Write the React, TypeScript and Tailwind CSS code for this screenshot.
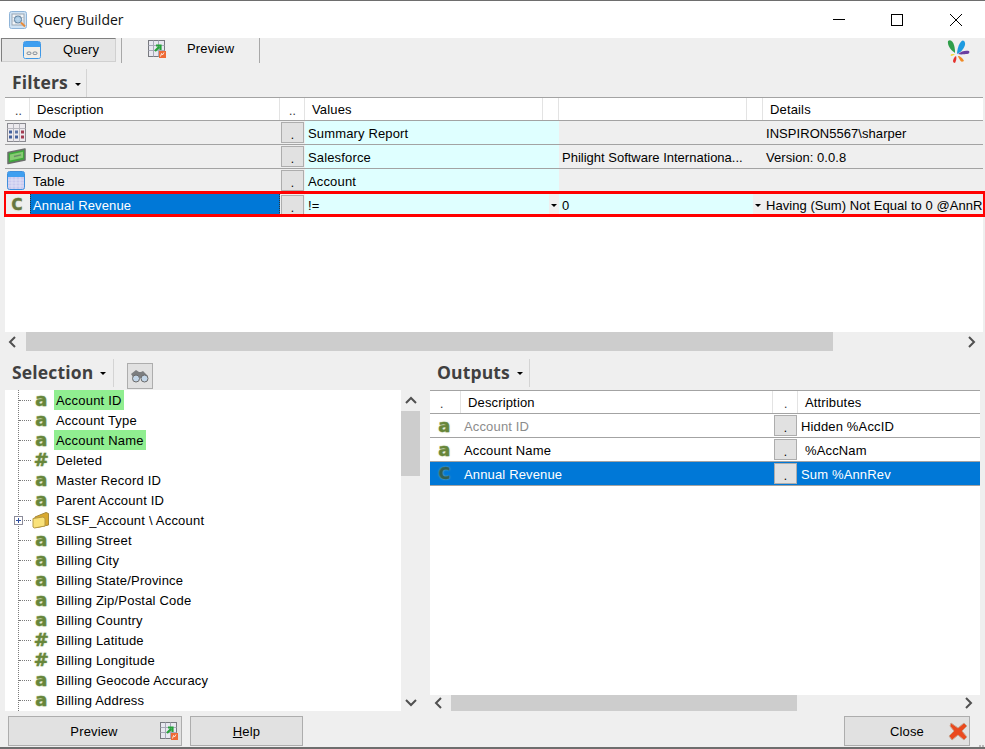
import type { ReactNode } from "react";

const treeItems = [
  { icon: "a", label: "Account ID", hit: true },
  { icon: "a", label: "Account Type" },
  { icon: "a", label: "Account Name", hit: true },
  { icon: "#", label: "Deleted" },
  { icon: "a", label: "Master Record ID" },
  { icon: "a", label: "Parent Account ID" },
  { icon: "folder", label: "SLSF_Account \\ Account" },
  { icon: "a", label: "Billing Street" },
  { icon: "a", label: "Billing City" },
  { icon: "a", label: "Billing State/Province" },
  { icon: "a", label: "Billing Zip/Postal Code" },
  { icon: "a", label: "Billing Country" },
  { icon: "#", label: "Billing Latitude" },
  { icon: "#", label: "Billing Longitude" },
  { icon: "a", label: "Billing Geocode Accuracy" },
  { icon: "a", label: "Billing Address" },
];

const Chevron = ({ dir }: { dir: "left" | "right" | "up" | "down" }) => {
  const points = {
    left: "7,1 2,6 7,11",
    right: "3,1 8,6 3,11",
    up: "1,8 6,3 11,8",
    down: "1,3 6,8 11,3",
  }[dir];
  return (
    <svg width="12" height="12" viewBox="0 0 12 12" fill="none">
      <polyline points={points} stroke="#505050" strokeWidth="2" />
    </svg>
  );
};

const Caret = () => (
  <span className="inline-block w-0 h-0 border-x-[3px] border-x-transparent border-t-[3px] border-t-black" />
);

const Letter = ({ char, color = "#67863a", size = "text-[18px]" }: { char: string; color?: string; size?: string }) => (
  <span
    className={`[font-family:'DejaVu_Sans',sans-serif] font-bold leading-none ${size} [text-shadow:0_0_2px_#b7c99a] [-webkit-text-stroke:0.4px_currentColor]`}
    style={{ color }}
  >
    {char}
  </span>
);

const AppIcon = () => (
  <svg width="18" height="18" viewBox="0 0 18 18">
    <rect x="0.5" y="0.5" width="17" height="17" rx="2" fill="#cfe3f5" stroke="#8fb4d8" />
    <rect x="3" y="3" width="12" height="11" fill="#f2f5f8" stroke="#9aa7b5" />
    <path d="M3 6.5h12M3 10h12M7 3v11M11 3v11" stroke="#b5bfca" strokeWidth="0.7" />
    <circle cx="9" cy="8.5" r="3.6" fill="#9ec7e8" fillOpacity="0.7" stroke="#5d7f9d" />
    <path d="M12 11.5l4 4" stroke="#e58b3c" strokeWidth="2" />
  </svg>
);

const QueryIcon = () => (
  <svg width="18" height="18" viewBox="0 0 18 18">
    <rect x="0.5" y="0.5" width="17" height="17" rx="2" fill="#eef3f9" stroke="#3f98e6" />
    <rect x="1" y="1" width="16" height="5" fill="#3f9ff0" />
    <rect x="1" y="6" width="16" height="11" fill="#f5e9d2" fillOpacity="0.45" />
    <rect x="4" y="11" width="4" height="2.5" rx="1.2" fill="none" stroke="#7b8794" />
    <rect x="10" y="11" width="4" height="2.5" rx="1.2" fill="none" stroke="#7b8794" />
  </svg>
);

const PreviewIcon = () => (
  <svg width="18" height="18" viewBox="0 0 18 18">
    <rect x="0.5" y="0.5" width="16" height="16" fill="#e8e8f0" stroke="#77797f" />
    <path d="M0.5 5.5h16M0.5 10.5h16M5.5 0.5v16M10.5 0.5v16" stroke="#a7a9b8" />
    <path d="M7 11l4-4M8 5.5h4.5V10" stroke="#25a33a" strokeWidth="2.2" fill="none" />
    <rect x="11" y="11" width="7" height="7" fill="#ee6a35" />
    <path d="M12.5 16.5l1-3 1 1.5 1.5-2.5" stroke="#fff" strokeWidth="0.8" fill="none" />
  </svg>
);

const ModeIcon = () => (
  <svg width="19" height="19" viewBox="0 0 19 19">
    <rect x="0.5" y="0.5" width="18" height="18" fill="#eceaee" stroke="#8a8a90" />
    <path d="M0.5 5.5h18M6.5 0.5v18M12.5 0.5v18" stroke="#b7b7be" />
    <rect x="2" y="7.5" width="3" height="3" fill="#42609c" />
    <rect x="2" y="12.5" width="3" height="3" fill="#42609c" />
    <rect x="8" y="7.5" width="3" height="3" fill="#5d76a8" />
    <rect x="8" y="12.5" width="3" height="3" fill="#42609c" />
    <rect x="14" y="7.5" width="3" height="3" fill="#a23d52" />
    <rect x="14" y="12.5" width="3" height="3" fill="#a23d52" />
  </svg>
);

const ProductIcon = () => (
  <svg width="19" height="17" viewBox="0 0 19 17">
    <path d="M1 4.5L18 1V12L1 15.5Z" fill="#3ea83a" stroke="#6b6f6b" strokeWidth="1.5" strokeLinejoin="round" />
    <path d="M3 6.5L16 3.8V9.8L3 12.5Z" fill="#86cc72" />
    <path d="M7 8.5l7-1.6" stroke="#6c8a68" strokeWidth="1.4" />
  </svg>
);

const TableIcon = () => (
  <svg width="18" height="19" viewBox="0 0 18 19">
    <rect x="0.5" y="0.5" width="17" height="18" rx="2" fill="#c9c9ee" stroke="#3f8fdc" />
    <rect x="1" y="1" width="16" height="5" fill="#3f9ff0" />
    <path d="M1 9h16M1 12h16M1 15h16M5 6v12M9 6v12M13 6v12" stroke="#e5e5f6" strokeWidth="0.8" />
  </svg>
);

const FolderIcon = () => (
  <svg width="18" height="18" viewBox="0 0 18 18">
    <path d="M3 6L14 1.5l2.5 1V14L5 16.5H2Z" fill="#d9a92f" stroke="#a78a3a" />
    <path d="M1 7.5l10-1.5 2 1.5V15L2.5 17 1 16Z" fill="#f9e27a" stroke="#b79a45" />
  </svg>
);

const Binoculars = () => (
  <svg width="20" height="14" viewBox="0 0 20 14">
    <path d="M1 5l5-4 3 2 2 0 2-1 5 5-3 4-7-3-3 3Z" fill="#7c7e80" />
    <circle cx="6" cy="9.5" r="3.5" fill="#c3d6e8" stroke="#6a6a6a" />
    <circle cx="14.5" cy="9.5" r="3.5" fill="#c3d6e8" stroke="#6a6a6a" />
  </svg>
);

const CloseIcon = () => (
  <svg width="20" height="20" viewBox="0 0 20 20">
    <path
      d="M3 2l7 5 6-5 3 3-5 5 5 6-3 3-6-5-6 5-3-4 5-5-4-5Z"
      fill="#ea4a1f"
      stroke="#c9a38e"
      strokeWidth="1"
    />
  </svg>
);

const Logo = () => (
  <svg width="24" height="24" viewBox="0 0 24 24">
    <path d="M1 2c3-2 5 1 6 4s1 6 1 8C5 12 0 7 1 2Z" fill="#2f9e4a" />
    <path d="M17 2c2 2 1 5-1 8s-4 4-6 5c0-3 1-8 3-11s3-3 4-2Z" fill="#1e9be0" />
    <path d="M11 15c3-3 8-4 11-3 1 1 0 3-2 3s-6 1-9 0Z" fill="#6b3fa0" />
    <path d="M11 17c2 0 5 2 6 5-2 1-3 1-4-1s-2-3-2-4Z" fill="#f08a24" />
    <path d="M9 17c1 2 0 5-1 7-1 0-2-1-2-2s1-4 3-5Z" fill="#e5322d" />
    <path d="M8 15c-1 1-3 2-4 2-1-1 0-2 1-2s2 0 3 0Z" fill="#f6d93a" />
  </svg>
);

const DotButton = () => (
  <div className="h-[21px] w-[23px] border border-[#adadad] bg-[#e1e1e1] text-black flex justify-center items-end pb-[1px] text-[12px] leading-none">
    .
  </div>
);

const Cell = ({ className = "", children }: { className?: string; children?: ReactNode }) => (
  <div className={`flex items-center whitespace-nowrap overflow-hidden min-w-0 ${className}`}>{children}</div>
);

const HeaderCell = ({ children, className = "" }: { children?: ReactNode; className?: string }) => (
  <div className={`border-r border-[#e3e3e3] flex items-center whitespace-nowrap ${className}`}>{children}</div>
);

const filterCols =
  "grid grid-cols-[25px_250px_25px_238px_16px_188px_16px_220px] w-[978px] h-[24px] border-b border-[#a3a3a3]";
const outputCols = "grid grid-cols-[31px_312px_25px_182px] w-[550px] h-[24px] border-b border-[#a3a3a3]";

const FilterRow = ({
  icon,
  name,
  value,
  extra,
  details,
}: {
  icon: ReactNode;
  name: string;
  value: string;
  extra?: string;
  details?: string;
}) => (
  <div className={`${filterCols} bg-[#efefef]`}>
    <Cell className="pl-[2px]">{icon}</Cell>
    <Cell className="pl-[3px] pt-[1px]">{name}</Cell>
    <Cell className="pl-[1px]">
      <DotButton />
    </Cell>
    <Cell className="col-span-2 pl-[3px] pt-[1px] bg-[#dfffff]">{value}</Cell>
    <Cell className="col-span-2 pl-[3px] pt-[1px] tracking-[0px]">{extra}</Cell>
    <Cell className="pl-[3px] pt-[1px] tracking-[0.05px]">{details}</Cell>
  </div>
);

const OutputRow = ({
  char,
  name,
  attr,
  attrPad,
  muted,
  selected,
}: {
  char: string;
  name: string;
  attr: string;
  attrPad: string;
  muted?: boolean;
  selected?: boolean;
}) => (
  <div className={`${outputCols} ${selected ? "bg-[#0078d7] text-white" : "bg-white"}`}>
    <Cell className="justify-center pr-[2px]">
      <Letter char={char} color={selected ? "#2f5f55" : "#67863a"} size={selected ? "text-[16px]" : "text-[18px]"} />
    </Cell>
    <Cell className={`pl-[3px] pt-[1px] ${muted ? "text-[#8c8c8c]" : ""}`}>{name}</Cell>
    <Cell className="pl-[1px]">
      <DotButton />
    </Cell>
    <Cell className={`pt-[1px] ${attrPad}`}>{attr}</Cell>
  </div>
);

const SectionTitle = ({ title, width }: { title: string; width: string }) => (
  <div className={`flex items-center h-[28px] ${width} border-r border-[#d4d4d4] relative`}>
    <span className="[font-family:'Open_Sans',sans-serif] font-bold text-[17.5px] text-[#404040] leading-none">{title}</span>
    <span className="ml-[7px] mt-[2px] flex">
      <Caret />
    </span>
  </div>
);

const FooterButton = ({ children, className = "" }: { children: ReactNode; className?: string }) => (
  <div className={`h-[30px] border border-[#adadad] bg-[#e1e1e1] flex items-center ${className}`}>{children}</div>
);

export default function App() {
  return (
    <div className="w-[985px] h-[749px] bg-[#efefef] overflow-hidden flex flex-col text-[13px] leading-none tracking-[0.15px] text-black [font-family:'Liberation_Sans',sans-serif]">
      {/* title bar */}
      <div className="h-[38px] shrink-0 bg-white border-t border-[#6e6e6e] flex items-center pl-[9px]">
        <AppIcon />
        <span className="ml-[6px] text-[14px] tracking-normal [font-family:'Open_Sans',sans-serif] text-[#111]">Query Builder</span>
        <div className="ml-auto flex items-center">
          <svg width="12" height="12" viewBox="0 0 12 12" className="mr-[46px]">
            <path d="M0 5.5h12" stroke="#000" />
          </svg>
          <svg width="12" height="12" viewBox="0 0 12 12" className="mr-[47px]">
            <rect x="0.5" y="0.5" width="11" height="11" fill="none" stroke="#000" />
          </svg>
          <svg width="12" height="12" viewBox="0 0 12 12" className="mr-[23px]">
            <path d="M0 0l12 12M12 0L0 12" stroke="#000" />
          </svg>
        </div>
      </div>

      {/* tabs */}
      <div className="h-[25px] shrink-0 flex items-start relative">
        <div className="ml-[1px] w-[115px] h-[24px] border border-[#d0d0d0] border-l-[#808080] border-t-[#808080] bg-white bg-[radial-gradient(#e6e6e6_1px,transparent_1px)] bg-[length:2px_2px] flex items-center pl-[21px] pb-[1px]">
          <QueryIcon />
          <span className="ml-[22px]">Query</span>
        </div>
        <div className="ml-[5px] w-[139px] h-[25px] border-l border-r border-[#a8a8a8] flex items-center pl-[26px] pb-[4px]">
          <PreviewIcon />
          <span className="ml-[21px]">Preview</span>
        </div>
        <div className="absolute right-[14px] top-[1px]">
          <Logo />
        </div>
      </div>

      {/* filters */}
      <div className="h-[34px] shrink-0 pl-[12px] flex items-center pt-[6px]">
        <SectionTitle title="Filters" width="w-[75px]" />
      </div>

      <div className="h-[235px] shrink-0 ml-[5px] w-[978px] bg-white relative">
        <div className={`${filterCols} border-t border-t-[#a3a3a3] bg-white`}>
          <HeaderCell className="pl-[10px] pt-[4px] text-[12px] text-[#333]">..</HeaderCell>
          <HeaderCell className="pl-[7px]">Description</HeaderCell>
          <HeaderCell className="pl-[9px] pt-[4px] text-[12px] text-[#333]">..</HeaderCell>
          <HeaderCell className="pl-[7px]">Values</HeaderCell>
          <HeaderCell />
          <HeaderCell />
          <HeaderCell />
          <div className="pl-[7px] flex items-center">Details</div>
        </div>
        <FilterRow icon={<ModeIcon />} name="Mode" value="Summary Report" details="INSPIRON5567\sharper" />
        <FilterRow
          icon={<ProductIcon />}
          name="Product"
          value="Salesforce"
          extra="Philight Software Internationa..."
          details="Version: 0.0.8"
        />
        <FilterRow icon={<TableIcon />} name="Table" value="Account" />
        <div className={`${filterCols} bg-[#efefef] border-b-0`}>
          <Cell className="justify-center pr-[1px]">
            <Letter char="C" color="#67763f" size="text-[15px]" />
          </Cell>
          <Cell className="pl-[2px] bg-[#0078d7] text-white border-x border-dotted border-[#333]">Annual Revenue</Cell>
          <Cell className="pl-[1px]">
            <DotButton />
          </Cell>
          <Cell className="pl-[3px] bg-[#dfffff]">!=</Cell>
          <Cell className="bg-[#dfffff] justify-end">
            <div className="w-[10px] h-full bg-[#efefef] flex items-center justify-center">
              <Caret />
            </div>
          </Cell>
          <Cell className="pl-[3px] bg-[#dfffff]">0</Cell>
          <Cell className="bg-[#dfffff] justify-end">
            <div className="w-[10px] h-full bg-[#efefef] flex items-center justify-center">
              <Caret />
            </div>
          </Cell>
          <Cell className="pl-[3px] tracking-[0.05px]">Having (Sum) Not Equal to 0 @AnnR</Cell>
        </div>
        {/* red annotation round the last row */}
        <div className="absolute left-[-1px] top-[94px] w-[981px] h-[26px] border-x-[2px] border-y-[3px] border-[#ff0000]" />
      </div>

      {/* filters scrollbar */}
      <div className="h-[19px] shrink-0 flex items-center pl-[8px] pr-[7px]">
        <Chevron dir="left" />
        <div className="ml-[6px] w-[807px] h-[19px] bg-[#cdcdcd]" />
        <div className="ml-auto">
          <Chevron dir="right" />
        </div>
      </div>

      {/* selection + outputs */}
      <div className="h-[360px] shrink-0 flex">
        <div className="w-[430px] shrink-0 pl-[5px]">
          <div className="h-[39px] flex items-center pl-[7px] pt-[4px]">
            <SectionTitle title="Selection" width="w-[102px]" />
            <div className="ml-[13px] mt-[6px] w-[26px] h-[26px] border border-[#adadad] bg-[#e1e1e1] flex items-center justify-center">
              <Binoculars />
            </div>
          </div>
          <div className="flex h-[321px]">
            <div className="w-[396px] bg-white overflow-hidden relative tracking-[0.2px]">
              <div className="absolute left-[13px] top-0 bottom-0 border-l border-dotted border-[#7a7a7a]" />
              {treeItems.map((item) => (
                <div key={item.label} className="h-[20px] flex items-center relative">
                  <div className="absolute left-[14px] w-[12px] border-t border-dotted border-[#7a7a7a]" />
                  {item.icon === "folder" && (
                    <div className="absolute left-[9px] top-[6px] w-[9px] h-[9px] border border-[#8c8c9a] bg-white flex items-center justify-center">
                      <div className="relative w-[5px] h-[5px]">
                        <div className="absolute left-0 right-0 top-[2px] h-[1px] bg-[#2f4f9f]" />
                        <div className="absolute top-0 bottom-0 left-[2px] w-[1px] bg-[#2f4f9f]" />
                      </div>
                    </div>
                  )}
                  <div className="w-[49px] shrink-0 flex justify-end pr-[1px]">
                    {item.icon === "folder" ? (
                      <span className="mr-[3px]">
                        <FolderIcon />
                      </span>
                    ) : (
                      <span className="w-[13px] mr-[5px] flex justify-center">
                        <Letter char={item.icon} />
                      </span>
                    )}
                  </div>
                  <span className={`h-[20px] flex items-center px-[2px] ${item.hit ? "bg-[#90ee90]" : ""}`}>
                    {item.label}
                  </span>
                </div>
              ))}
            </div>
            <div className="w-[19px] flex flex-col items-center">
              <div className="h-[21px] flex items-center">
                <Chevron dir="up" />
              </div>
              <div className="w-[19px] h-[65px] bg-[#cdcdcd]" />
              <div className="mt-auto h-[17px] flex items-center">
                <Chevron dir="down" />
              </div>
            </div>
          </div>
        </div>

        <div className="w-[550px] shrink-0">
          <div className="h-[39px] flex items-center pl-[7px] pt-[4px]">
            <SectionTitle title="Outputs" width="w-[93px]" />
          </div>
          <div className="h-[305px] bg-white">
            <div className={`${outputCols} border-t border-t-[#a3a3a3]`}>
              <HeaderCell className="pl-[10px] pt-[4px] text-[12px] text-[#333]">.</HeaderCell>
              <HeaderCell className="pl-[7px]">Description</HeaderCell>
              <HeaderCell className="pl-[11px] pt-[4px] text-[12px] text-[#333]">.</HeaderCell>
              <div className="pl-[7px] flex items-center">Attributes</div>
            </div>
            <OutputRow char="a" name="Account ID" attr="Hidden %AccID" attrPad="pl-[3px]" muted />
            <OutputRow char="a" name="Account Name" attr="%AccNam" attrPad="pl-[7px]" />
            <OutputRow char="C" name="Annual Revenue" attr="Sum %AnnRev" attrPad="pl-[3px]" selected />
          </div>
          <div className="h-[16px] flex items-center">
            <div className="pl-[4px]">
              <Chevron dir="left" />
            </div>
            <div className="ml-[5px] w-[346px] h-[16px] bg-[#cdcdcd]" />
            <div className="ml-auto pr-[5px]">
              <Chevron dir="right" />
            </div>
          </div>
        </div>
      </div>

      {/* footer */}
      <div className="flex-1 flex pt-[5px] pl-[8px] relative">
        <FooterButton className="w-[174px] relative justify-center pr-[2px]">
          <span>Preview</span>
          <span className="absolute right-[3px] top-[5px]">
            <PreviewIcon />
          </span>
        </FooterButton>
        <FooterButton className="ml-[8px] w-[113px] justify-center">
          <span>
            <span className="underline">H</span>elp
          </span>
        </FooterButton>
        <FooterButton className="ml-[541px] w-[126px] justify-center relative">
          <span>Close</span>
          <span className="absolute right-[1px] top-[4px]">
            <CloseIcon />
          </span>
        </FooterButton>
        {/* size grip */}
        <div className="absolute right-[1px] bottom-0 flex gap-[1px]">
          <div className="w-[2px] h-[2px] bg-[#b8b8b8]" />
          <div className="w-[2px] h-[2px] bg-[#b8b8b8]" />
        </div>
      </div>
      <div className="h-[2px] shrink-0 bg-[#6e6e6e]" />
    </div>
  );
}
